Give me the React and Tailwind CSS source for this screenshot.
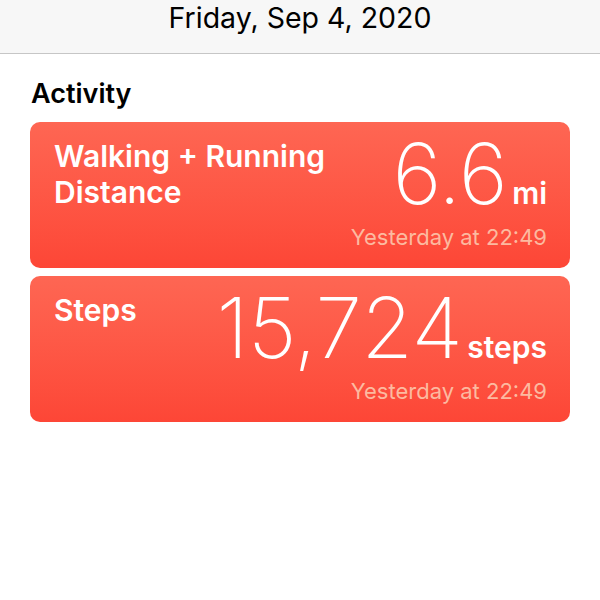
import React from 'react';

const cards = [
  {
    title: ['Walking + Running', 'Distance'],
    value: '6.6',
    unit: 'mi',
    time: 'Yesterday at 22:49',
  },
  {
    title: ['Steps'],
    value: '15,724',
    unit: 'steps',
    time: 'Yesterday at 22:49',
  },
];

const App = () => {
  return (
    <main className="w-[600px] h-[600px] bg-white font-['Inter',sans-serif] overflow-hidden">
      <header className="h-[54px] bg-[#f7f7f7] border-b border-[#c6c6c6] flex justify-center">
        <h1 className="text-[28.5px] leading-[36px] text-black font-normal">Friday, Sep 4, 2020</h1>
      </header>
      <section className="px-[30px] pt-[24px]">
        <h2 className="pl-[1px] text-[27px] leading-[32px] font-semibold text-black">Activity</h2>
        <div className="flex flex-col gap-[8px] mt-[12px]">
          {cards.map((card) => (
            <div
              key={card.unit}
              className="h-[146px] rounded-[10px] bg-gradient-to-b from-[#fe6653] to-[#fd4636] pl-[24px] pr-[23px] pt-[16px] flex justify-between text-white"
            >
              <div className="text-[30px] leading-[36px] font-semibold">
                {card.title.map((line) => (
                  <p key={line}>{line}</p>
                ))}
              </div>
              <div className="flex flex-col items-end">
                <p className="flex items-baseline h-[72px]">
                  <span className="text-[84px] leading-[72px] font-extralight tracking-[-0.5px]">{card.value}</span>
                  <span className="text-[30px] leading-none font-semibold ml-[5px]">{card.unit}</span>
                </p>
                <p className="text-[22px] leading-[26px] text-[#fcbaa0] mt-[14px]">{card.time}</p>
              </div>
            </div>
          ))}
        </div>
      </section>
    </main>
  );
};

export default App;
